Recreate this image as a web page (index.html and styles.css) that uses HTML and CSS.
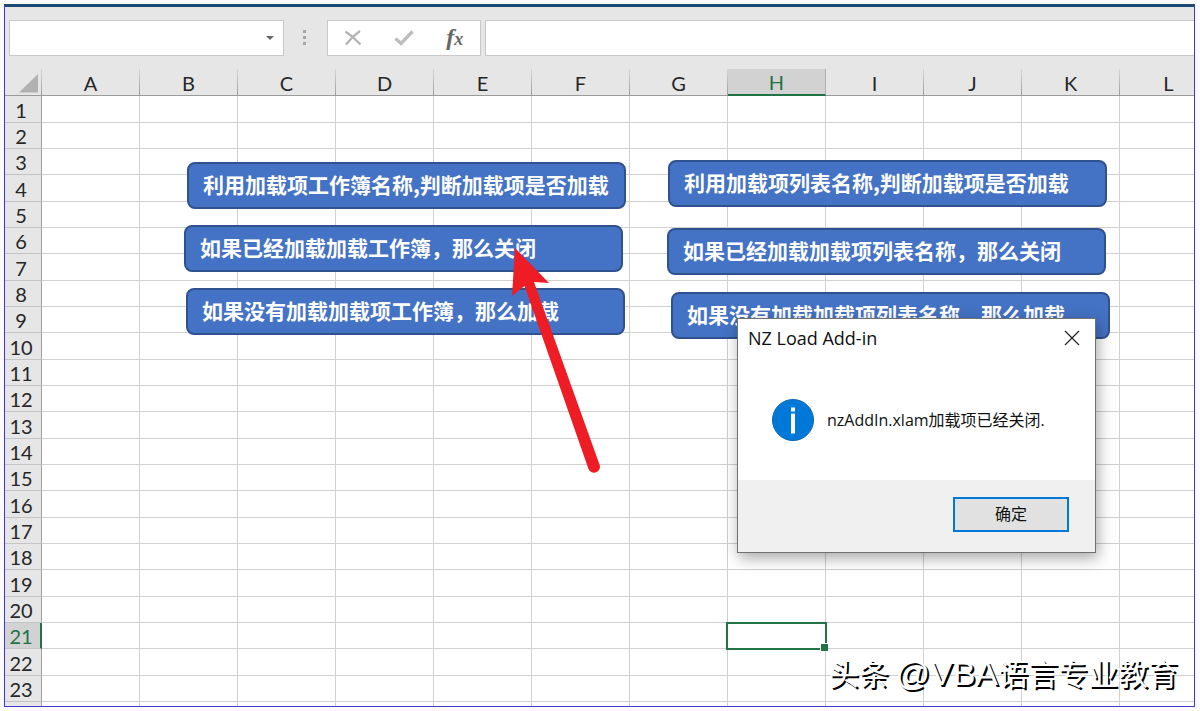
FILE: index.html
```html
<!DOCTYPE html>
<html lang="zh-CN">
<head>
<meta charset="utf-8">
<title>NZ Load Add-in</title>
<link rel="stylesheet" href="styles.css">
</head>
<body>
<main class="window">
  <div class="formula-bar">
    <div class="name-box">
      <input class="name-input" type="text" aria-label="名称框">
      <button class="name-toggle" type="button" aria-label="展开">
        <svg width="8" height="4" viewBox="0 0 8 4"><path d="M0 0h8L4 4z" fill="#666"/></svg>
      </button>
    </div>
    <svg class="grip" width="4" height="16" viewBox="0 0 4 16" fill="#a6a6a6"><path d="M0 0h3v3H0zM0 6h3v3H0zM0 12h3v3H0z"/></svg>
    <div class="fx-tools">
      <button type="button" aria-label="取消">
        <svg width="18" height="16" viewBox="0 0 18 16" fill="none" stroke="#b4b4b4"><path d="M1.500 1.500Q9 6.500 16.500 14.500" stroke-width="2.300"/><path d="M16 1Q8 6.500 2 14.500" stroke-width="2.300"/></svg>
      </button>
      <button type="button" aria-label="输入">
        <svg width="20" height="16" viewBox="0 0 20 16" fill="none" stroke="#bdbdbd" stroke-width="3.400"><path d="M1.500 8.500L7 13.500L18.500 1.500"/></svg>
      </button>
      <button class="fx" type="button" aria-label="插入函数"><span class="fx-f">f</span><span class="fx-x">x</span></button>
    </div>
    <input class="formula-input" type="text" aria-label="编辑栏">
  </div>

  <div class="sheet">
    <table class="grid">
      <thead>
        <tr id="head"><th class="corner"><svg width="20" height="19" viewBox="0 0 20 19"><path d="M19 0V18.500H0z" fill="#b1b1b1"/></svg></th></tr>
      </thead>
      <tbody id="rows"></tbody>
    </table>

    <button class="shape shape-1" type="button">利用加载项工作簿名称,判断加载项是否加载</button>
    <button class="shape shape-2" type="button">如果已经加载加载工作簿，那么关闭</button>
    <button class="shape shape-3" type="button">如果没有加载加载项工作簿，那么加载</button>
    <button class="shape shape-4" type="button">利用加载项列表名称,判断加载项是否加载</button>
    <button class="shape shape-5" type="button">如果已经加载加载项列表名称，那么关闭</button>
    <button class="shape shape-6" type="button">如果没有加载加载项列表名称，那么加载</button>

    <svg class="pointer" width="90" height="228" viewBox="0 0 90 228" fill="#ee1c24"><path d="M5 2L39 37L24 36L89.500 218.500A5.800 5.800 0 0 1 78.500 223L14.500 40L2 50z"/></svg>

    <section class="dialog" role="dialog" aria-labelledby="dialog-title">
      <header class="dialog-head">
        <h1 class="dialog-title" id="dialog-title">NZ Load Add-in</h1>
        <button class="dialog-close" type="button" aria-label="关闭">
          <svg width="16" height="16" viewBox="0 0 16 16" fill="none" stroke="#222" stroke-width="1.200"><path d="M1 1L15 15M15 1L1 15"/></svg>
        </button>
      </header>
      <div class="dialog-body">
        <svg width="42" height="42" viewBox="0 0 42 42"><circle cx="21" cy="21" r="20.500" fill="#0078d7" stroke="#0f66ad"/><path d="M19 8.500h4v4h-4zM19 14.500h4v20h-4z" fill="#fff"/></svg>
        <p class="dialog-text">nzAddIn.xlam加载项已经关闭.</p>
      </div>
      <footer class="dialog-foot">
        <button class="dialog-ok" type="button">确定</button>
      </footer>
    </section>

    <p class="watermark">头条 <span class="watermark-latin">@VBA</span>语言专业教育</p>
  </div>
</main>
<script src="script.js"></script>
</body>
</html>
```
FILE: styles.css
```css
* {
  box-sizing: border-box;
}

body {
  margin: 0;
  padding: 4px 5px 4px 4px;
  background: #fcfafc;
  font-family: "Open Sans", "Noto Sans CJK SC", sans-serif;
}

button,
input {
  font: inherit;
  margin: 0;
}

.window {
  display: flex;
  flex-direction: column;
  height: calc(100vh - 8px);
  border: 1px solid #4038d0;
  border-top: 3px solid #1a4a74;
  background: #fff;
  overflow: hidden;
}

.formula-bar {
  display: flex;
  align-items: center;
  padding: 13px 0 13px 4px;
  background: #e6e6e6;
}

.name-box {
  display: flex;
  width: 275px;
  height: 36px;
  border: 1px solid #c8c8c8;
  background: #fff;
}

.name-input {
  flex: 1;
  min-width: 0;
  padding: 0 8px;
  border: 0;
  background: transparent;
}

.name-toggle {
  display: flex;
  align-items: center;
  justify-content: center;
  width: 26px;
  padding: 0;
  border: 0;
  background: transparent;
}

.grip {
  margin: 0 20px 0 19px;
}

.fx-tools {
  display: flex;
  width: 154px;
  height: 36px;
  margin-right: 4px;
  border: 1px solid #c8c8c8;
  background: #fff;
}

.fx-tools button {
  display: flex;
  flex: 1;
  align-items: center;
  justify-content: center;
  padding: 0;
  border: 0;
  background: transparent;
}

.fx-tools .fx {
  align-items: baseline;
  color: #666;
  font-family: "Liberation Serif", serif;
  font-style: italic;
  font-weight: bold;
}

.fx-f {
  font-size: 24px;
  line-height: 32px;
}

.fx-x {
  font-size: 18px;
}

.formula-input {
  flex: 1;
  min-width: 0;
  height: 36px;
  padding: 0 8px;
  border: 1px solid #c8c8c8;
  border-right: 0;
  background: #fff;
}

.sheet {
  position: relative;
  flex: 1;
  min-height: 0;
  overflow: hidden;
}

.grid {
  width: 1213px;
  border-collapse: separate;
  border-spacing: 0;
  table-layout: fixed;
}

.grid th,
.grid td {
  width: 98px;
  height: 26px;
  padding: 0;
  border-right: 1px solid #d0d0d0;
  border-bottom: 1px solid #d0d0d0;
}

.grid thead th {
  height: 27px;
}

.grid tbody tr:nth-child(3n + 1) > * {
  height: 27px;
}

.grid th {
  background: #e6e6e6;
  color: #262626;
  font-family: Lato, sans-serif;
  font-size: 20px;
  font-weight: 400;
  line-height: 24px;
}

.grid thead th {
  padding-top: 2px;
  border-right: 1px solid;
  border-bottom: 1px solid #9a9a9a;
  border-image: linear-gradient(#d8d8d8, #9a9a9a) 1;
  border-top: 0;
  border-left: 0;
}

.grid .corner {
  width: 37px;
  padding: 0;
}

.corner svg {
  display: block;
  margin: 2px 2px 0 auto;
}

.grid tbody th {
  padding: 1px 4px 0 0;
  border-right-color: #a0a0a0;
  border-bottom-color: #c4c4c4;
}

.grid thead .active {
  border-bottom: 2px solid #217346;
  border-image: none;
  border-right-color: #b0b0b0;
  background: #d2d2d2;
  color: #217346;
  line-height: 23px;
}

.grid tbody th.active {
  padding-right: 3px;
  border-right: 2px solid #217346;
  background: #d2d2d2;
  color: #217346;
}

.grid .selected {
  position: relative;
}

.selected::before {
  content: "";
  position: absolute;
  inset: -1px -2px -2px -2px;
  border: 2px solid #217346;
}

.selected::after {
  content: "";
  position: absolute;
  right: -3px;
  bottom: -3px;
  width: 7px;
  height: 7px;
  border: 1px solid #fff;
  border-right: 0;
  border-bottom: 0;
  background: #217346;
}

.shape {
  position: absolute;
  width: 439px;
  height: 47px;
  padding: 0 14px 3px;
  border: 2px solid #2f528f;
  border-radius: 8px;
  background: #4472c4;
  color: #fff;
  font-family: "Noto Sans CJK SC", sans-serif;
  font-size: 21px;
  font-weight: 600;
  line-height: 30px;
  text-align: left;
  white-space: nowrap;
}

.shape-1 { left: 182px; top: 93px; }
.shape-2 { left: 179px; top: 156px; }
.shape-3 { left: 181px; top: 219px; }
.shape-4 { left: 663px; top: 91px; }
.shape-5 { left: 662px; top: 159px; }
.shape-6 { left: 666px; top: 223px; }

.pointer {
  position: absolute;
  left: 505px;
  top: 177px;
}

.dialog {
  position: absolute;
  left: 732px;
  top: 249px;
  width: 359px;
  border: 1px solid #707070;
  background: #fff;
  box-shadow: 2px 5px 14px rgba(0, 0, 0, 0.35);
  color: #111;
}

.dialog-head {
  display: flex;
  align-items: center;
  justify-content: space-between;
  height: 38px;
  padding: 0 15px 0 10px;
}

.dialog-title {
  margin: 0;
  font-size: 18px;
  font-weight: 400;
  line-height: 24px;
}

.dialog-close {
  display: flex;
  padding: 0;
  border: 0;
  background: transparent;
}

.dialog-body {
  display: flex;
  align-items: center;
  gap: 13px;
  height: 123px;
  padding: 2px 34px 0;
}

.dialog-text {
  margin: 0;
  font-size: 16px;
  line-height: 24px;
  white-space: nowrap;
}

.dialog-foot {
  display: flex;
  justify-content: flex-end;
  padding: 17px 26px 20px;
  background: #f0f0f0;
}

.dialog-ok {
  width: 116px;
  height: 35px;
  padding: 0 0 2px;
  border: 2px solid #0078d7;
  background: #e1e1e1;
  color: #111;
  font-size: 16px;
  line-height: 24px;
}

.watermark {
  position: absolute;
  right: 16px;
  bottom: 11px;
  margin: 0;
  color: #fff;
  font-family: "Noto Sans CJK SC", sans-serif;
  font-size: 30px;
  line-height: 44px;
  text-shadow: 2px 2px 0 #000;
  white-space: nowrap;
}

.watermark-latin {
  font-family: "Liberation Sans", sans-serif;
  font-size: 34px;
}
```
FILE: script.js
```js
const columns = "ABCDEFGHIJKL".split("");
const activeColumn = "H";
const activeRow = 21;
const rowCount = 23;

const head = document.getElementById("head");
columns.forEach((name) => {
  const th = document.createElement("th");
  th.scope = "col";
  th.textContent = name;
  if (name === activeColumn) th.className = "active";
  head.append(th);
});

const body = document.getElementById("rows");
for (let n = 1; n <= rowCount + 1; n += 1) {
  const tr = document.createElement("tr");
  const th = document.createElement("th");
  th.scope = "row";
  th.textContent = n <= rowCount ? n : "";
  if (n === activeRow) th.className = "active";
  tr.append(th);
  columns.forEach((name) => {
    const td = document.createElement("td");
    if (n === activeRow && name === activeColumn) td.className = "selected";
    tr.append(td);
  });
  body.append(tr);
}
```
